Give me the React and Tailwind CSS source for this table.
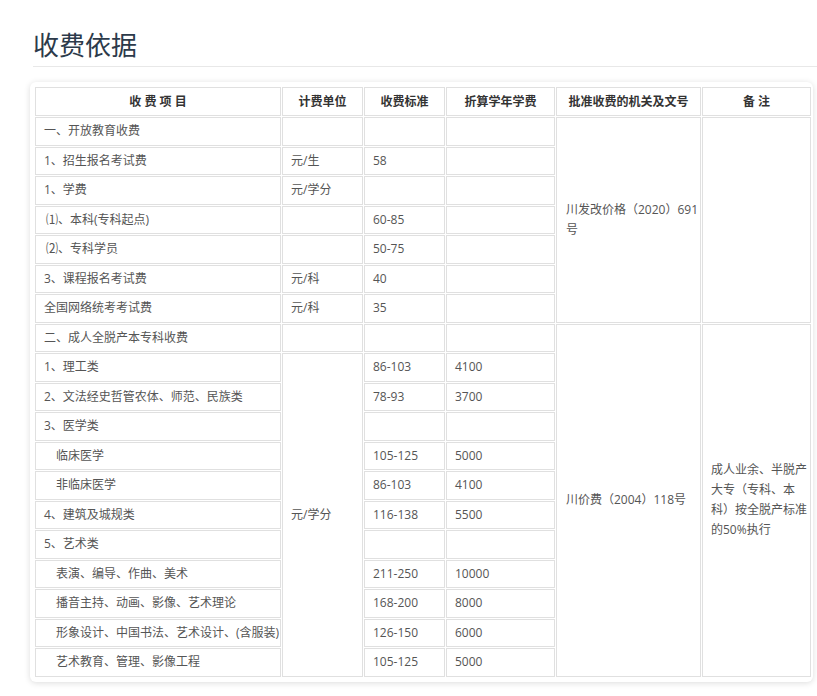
const rows1 = [
  { name: '一、开放教育收费', unit: '', std: '', year: '' },
  { name: '1、招生报名考试费', unit: '元/生', std: '58', year: '' },
  { name: '1、学费', unit: '元/学分', std: '', year: '' },
  { name: '⑴、本科(专科起点)', unit: '', std: '60-85', year: '', pad: 'pl-[10px]' },
  { name: '⑵、专科学员', unit: '', std: '50-75', year: '', pad: 'pl-[10px]' },
  { name: '3、课程报名考试费', unit: '元/科', std: '40', year: '' },
  { name: '全国网络统考考试费', unit: '元/科', std: '35', year: '' },
];

const rows2 = [
  { name: '1、理工类', std: '86-103', year: '4100' },
  { name: '2、文法经史哲管农体、师范、民族类', std: '78-93', year: '3700' },
  { name: '3、医学类', std: '', year: '' },
  { name: '临床医学', std: '105-125', year: '5000', sub: true },
  { name: '非临床医学', std: '86-103', year: '4100', sub: true },
  { name: '4、建筑及城规类', std: '116-138', year: '5500' },
  { name: '5、艺术类', std: '', year: '' },
  { name: '表演、编导、作曲、美术', std: '211-250', year: '10000', sub: true },
  { name: '播音主持、动画、影像、艺术理论', std: '168-200', year: '8000', sub: true },
  { name: '形象设计、中国书法、艺术设计、(含服装)', std: '126-150', year: '6000', sub: true },
  { name: '艺术教育、管理、影像工程', std: '105-125', year: '5000', sub: true },
];

const td = 'border border-[#e0e0e0] px-[8px] py-[5px] leading-[16.5px] align-middle whitespace-nowrap overflow-hidden';
const th = 'border border-[#e0e0e0] px-[8px] py-[5px] leading-[17px] font-bold text-[#333] text-center';

export default function App() {
  return (
    <div
      className="bg-white min-h-screen pl-[30px] pt-[27px]"
      style={{ fontFamily: '"Open Sans", "Noto Sans CJK SC", sans-serif' }}
    >
      <h2 className="ml-[3px] text-[26px] leading-[36px] text-[#2c3a4a] border-b border-[#e8e8e8] pb-[3px]">
        收费依据
      </h2>

      <div className="mt-[15px] w-[783px] bg-white rounded-md p-[4px] shadow-[0_1px_6px_rgba(0,0,0,0.14)]">
        <table className="table-fixed border-separate border-spacing-[1px] text-[12px] text-[#555] w-[778px]">
          <colgroup>
            <col className="w-[246px]" />
            <col className="w-[81px]" />
            <col className="w-[81px]" />
            <col className="w-[109px]" />
            <col className="w-[145px]" />
            <col className="w-[109px]" />
          </colgroup>
          <thead>
            <tr>
              <th className={th}>收 费 项 目</th>
              <th className={th}>计费单位</th>
              <th className={th}>收费标准</th>
              <th className={th}>折算学年学费</th>
              <th className={th}>批准收费的机关及文号</th>
              <th className={th}>备 注</th>
            </tr>
          </thead>
          <tbody>
            {rows1.map((r, i) => (
              <tr key={'a' + i}>
                <td className={`${td} ${r.pad || ''}`}>{r.name}</td>
                <td className={td}>{r.unit}</td>
                <td className={td}>{r.std}</td>
                <td className={td}>{r.year}</td>
                {i === 0 && (
                  <>
                    <td rowSpan={7} className="border border-[#e0e0e0] pl-[9px] pr-0 leading-[20px] align-middle whitespace-nowrap">
                      川发改价格（2020）691
                      <br />号
                    </td>
                    <td rowSpan={7} className="border border-[#e0e0e0]"></td>
                  </>
                )}
              </tr>
            ))}
            <tr>
              <td className={td}>二、成人全脱产本专科收费</td>
              <td className={td}></td>
              <td className={td}></td>
              <td className={td}></td>
              <td rowSpan={12} className="border border-[#e0e0e0] pl-[9px] pr-0 leading-[20px] align-middle whitespace-nowrap">
                川价费（2004）118号
              </td>
              <td rowSpan={12} className="border border-[#e0e0e0] pl-[8px] pr-0 leading-[20px] align-middle whitespace-nowrap">
                成人业余、半脱产
                <br />大专（专科、本
                <br />科）按全脱产标准
                <br />的50%执行
              </td>
            </tr>
            {rows2.map((r, i) => (
              <tr key={'b' + i}>
                <td className={`${td} ${r.sub ? 'pl-[20px]' : ''}`}>{r.name}</td>
                {i === 0 && (
                  <td rowSpan={11} className={td}>
                    元/学分
                  </td>
                )}
                <td className={td}>{r.std}</td>
                <td className={td}>{r.year}</td>
              </tr>
            ))}
          </tbody>
        </table>
      </div>
    </div>
  );
}
